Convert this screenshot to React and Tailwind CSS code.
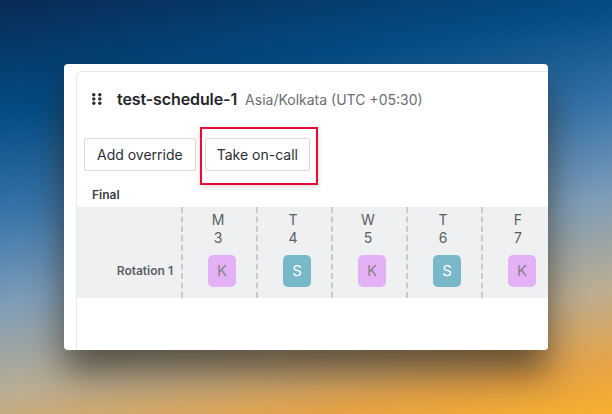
import React from 'react';

const days = [
  { d: 'M', n: 3, who: 'K' },
  { d: 'T', n: 4, who: 'S' },
  { d: 'W', n: 5, who: 'K' },
  { d: 'T', n: 6, who: 'S' },
  { d: 'F', n: 7, who: 'K' },
];

const DragDots = () => (
  <svg width="10" height="12" viewBox="0 0 10 12" className="shrink-0">
    {[0, 1, 2].map(r => [0, 1].map(c => (
      <circle key={`${r}-${c}`} cx={1.8 + c * 6} cy={1.8 + r * 4.2} r="1.7" fill="#2a2d33" />
    )))}
  </svg>
);

const Chip = ({ who }) => (
  <div className={`w-[28px] h-[32px] rounded-[5px] flex items-center justify-center text-[15px] ${who === 'K' ? 'bg-[#e5b1f6] text-[#85838c]' : 'bg-[#79b8c9] text-white'}`}>
    {who}
  </div>
);

export default function App() {
  return (
    <div className="relative w-[612px] h-[414px] overflow-hidden font-['Inter',sans-serif] bg-[linear-gradient(170deg,#082a53_0%,#034c86_22%,#3572a8_40%,#7c9cb8_58%,#bcae92_76%,#e6a246_90%,#f6b02c_100%)]">
      <div className="pt-[64px] pl-[64px]">
        <div className="w-[484px] h-[286px] bg-white rounded-[4px] overflow-hidden pl-[12px] pt-[7px] shadow-[0_22px_36px_rgba(40,30,20,0.65)]">
          <div className="w-[520px] h-[300px] border border-[#e8e9ec] rounded-tl-[6px] bg-white">
            <div className="flex items-center h-[42px] mt-[6px] pl-[15px] gap-[15px]">
              <DragDots />
              <div className="flex items-baseline gap-[8px]">
                <span className="text-[16px] font-semibold text-[#24262b] tracking-[-0.1px]">test-schedule-1</span>
                <span className="text-[14px] text-[#6b6d73]">Asia/Kolkata (UTC +05:30)</span>
              </div>
            </div>
            <div className="flex gap-[9px] pl-[7px] mt-[18px]">
              <button className="h-[33px] px-[12px] border border-[#d8d9dc] rounded-[2px] text-[14px] text-[#2b2d33] bg-white">Add override</button>
              <button className="h-[33px] px-[11px] border border-[#d8d9dc] rounded-[2px] text-[14px] text-[#2b2d33] bg-white">Take on-call</button>
            </div>
            <div className="pl-[15px] mt-[16px] text-[12px] font-semibold text-[#3a3c42] leading-[16px]">Final</div>
            <div className="mt-[4px] h-[91px] bg-[#eff0f2] flex">
              <div className="w-[104px] shrink-0 flex items-end justify-end pr-[8px] pb-[18px]">
                <span className="text-[12px] font-semibold text-[#5e6068]">Rotation 1</span>
              </div>
              {days.map((day, i) => (
                <div key={i} className="w-[75px] shrink-0 border-l-2 border-dashed border-[#c9cacd] flex flex-col items-center pt-[4px]">
                  <span className="text-[14px] leading-[18px] text-[#5c5e66] -ml-[3px]">{day.d}</span>
                  <span className="text-[14px] leading-[18px] text-[#5c5e66] -ml-[3px]">{day.n}</span>
                  <div className="mt-[8px] ml-[5px]">
                    <Chip who={day.who} />
                  </div>
                </div>
              ))}
            </div>
          </div>
        </div>
      </div>
      <div className="absolute left-[200px] top-[127px] w-[118px] h-[58px] border-2 border-[#ea0a35] shadow-[0_2px_6px_rgba(0,0,0,0.15)]"></div>
    </div>
  );
}
